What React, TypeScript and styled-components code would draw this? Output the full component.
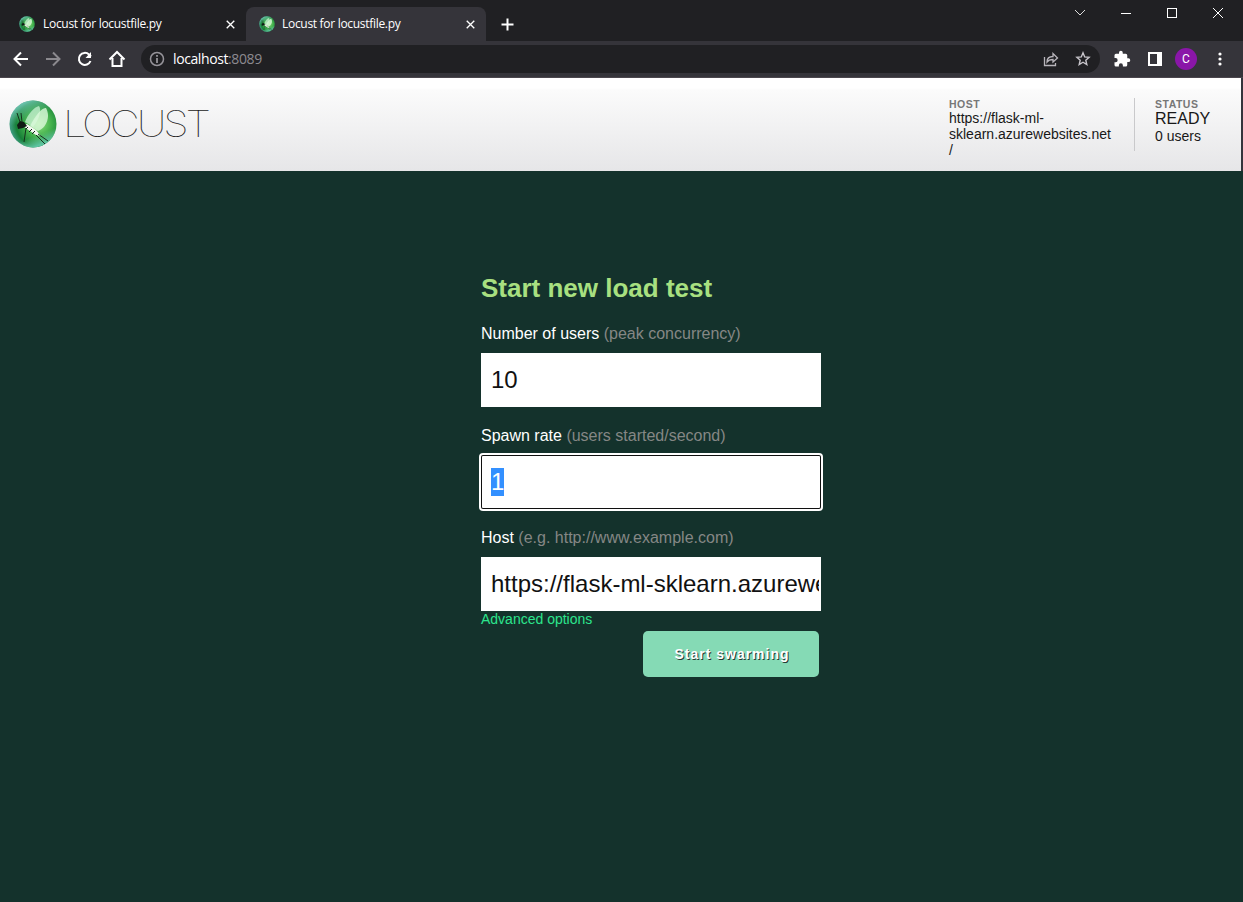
import React from 'react';
import styled, { createGlobalStyle } from 'styled-components';

const Global = createGlobalStyle`
  * { box-sizing: border-box; }
  body { margin: 0; background: #14322c; font-family: "Liberation Sans", Arial, sans-serif; overflow: hidden; }
`;
const Window = styled.div`
  width: 100%; height: 902px; display: flex; flex-direction: column; background: #14322c;
`;
const TabStrip = styled.div`
  height: 41px; flex: none; display: flex; align-items: flex-start; padding: 7px 0 0 6px; background: #202023;
`;
const Tab = styled.div<{ $active?: boolean }>`
  width: 240px; height: 34px; flex: none; display: flex; align-items: center; padding: 0 11px 0 13px;
  border-radius: 8px 8px 0 0; background: ${p => (p.$active ? '#35343a' : 'transparent')};
  svg { flex: none; }
`;
const TabTitle = styled.span<{ $gap: number }>`
  flex: 1; margin-left: ${p => p.$gap}px; color: #fff; white-space: nowrap;
  font: 12px/16px "Open Sans", "Noto Sans", sans-serif; letter-spacing: -0.3px;
`;
const NewTab = styled.div`
  height: 34px; display: flex; align-items: center; padding-left: 15px;
`;
const WindowButtons = styled.div`
  margin: -7px 19px 0 auto; height: 26px; display: flex; align-items: center; gap: 34px;
`;
const Toolbar = styled.div`
  height: 37px; flex: none; display: flex; align-items: center; padding: 0 14px 0 12px;
  background: #35343a; border-bottom: 1px solid #4b464d;
`;
const NavButtons = styled.div`
  display: flex; gap: 14px; margin-right: 15px;
`;
const AddressBar = styled.div`
  flex: 1; height: 28px; border-radius: 14px; background: #202023; display: flex; align-items: center;
  padding: 0 9px 0 8px; margin-right: 13px;
`;
const Url = styled.span`
  flex: 1; margin-left: 8px; color: #fff; font: 14px/18px "Open Sans", sans-serif; letter-spacing: -0.4px;
  em { font-style: normal; color: #8c8a90; }
`;
const AddressIcons = styled.div`
  display: flex; gap: 16px;
`;
const Extensions = styled.div`
  display: flex; align-items: center; gap: 14px;
`;
const Avatar = styled.span`
  width: 22px; height: 22px; margin: 0 0 0 -2px; border-radius: 50%; background: #8a16a8; color: #fff;
  display: flex; align-items: center; justify-content: center; font: 12px/1 Roboto, sans-serif;
`;
const Header = styled.header`
  height: 93px; flex: none; display: flex; padding: 20px 30px 0 9px; border-right: 2px solid #34343c;
  background: linear-gradient(#fff 0, #fff 10px, #fbfbfb 12px, #e6e6e8 100%);
`;
const Logo = styled.div`
  display: flex; align-items: flex-start; svg { margin-top: 2px; }
`;
const LogoName = styled.span`
  margin: 3px 0 0 6px; font: 100 37px/45px Inter, sans-serif; letter-spacing: -2.8px; color: #222;
  transform: scaleX(1.12); transform-origin: 0 0;
`;
const Stats = styled.div`
  display: flex; margin-left: auto;
`;
const Stat = styled.div<{ $width: number; $divider?: boolean }>`
  width: ${p => p.$width}px; height: 53px; font-size: 14px; line-height: 16px; color: #181818;
  ${p => p.$divider && 'border-left: 1px solid #c9c9cb; padding-left: 20px;'}
`;
const StatLabel = styled.div`
  font-size: 10.5px; line-height: 12px; font-weight: bold; letter-spacing: 0.5px; color: #777;
`;
const StatText = styled.div`
  width: 163px; overflow-wrap: break-word;
`;
const Status = styled.div`
  font-size: 16px; line-height: 18px;
`;
const Form = styled.form`
  width: 340px; margin: 102px 0 0 481px; display: flex; flex-direction: column;
`;
const Title = styled.h2`
  margin: 0 0 22px; font-size: 26px; line-height: 30px; color: #a8e080; white-space: nowrap;
`;
const Label = styled.label`
  font-size: 16px; line-height: 18px; color: #fff; margin-bottom: 10px;
  span { color: #858785; }
`;
const Field = styled.div<{ $focused?: boolean }>`
  height: 54px; margin-bottom: 20px; padding: 0 2px 0 10px; display: flex; align-items: center;
  background: #fff; color: #111; font-size: 24px; white-space: nowrap;
  ${p => p.$focused && 'box-shadow: inset 0 0 0 1px #101010, 0 0 0 2px #fff; border-radius: 2px;'}
`;
const Value = styled.span`
  overflow: hidden; flex: 1;
`;
const Selected = styled.span`
  background: #3390ff; color: #fff; line-height: 28px;
`;
const Advanced = styled.a`
  margin-top: -20px; font-size: 14px; line-height: 16px; color: #2ce58d;
`;
const Submit = styled.button`
  width: 176px; height: 46px; margin: 4px 2px 0 auto; padding: 0 0 0 2px; border: 0; border-radius: 5px;
  background: #85dab5; color: #fff; font: bold 14px/18px "Liberation Sans", sans-serif; letter-spacing: 1px;
  text-shadow: 1px 1px 0 #243b35;
`;

const LocustMark = ({ size, id }: { size: number; id: string }) => (
  <svg width={size} height={size} viewBox="0 0 48 48">
    <defs>
      <radialGradient id={id} cx=".62" cy=".5" r=".6">
        <stop offset="0" stopColor="#8be07c" />
        <stop offset=".45" stopColor="#43b04c" />
        <stop offset=".8" stopColor="#178038" />
        <stop offset="1" stopColor="#3c9a7c" />
      </radialGradient>
      <linearGradient id={id + 's'} x1=".1" y1="0" x2=".5" y2="1">
        <stop offset="0" stopColor="#86d6d4" />
        <stop offset=".45" stopColor="#6fc9a0" stopOpacity="0" />
        <stop offset=".8" stopColor="#6fc9a0" stopOpacity="0" />
        <stop offset="1" stopColor="#5cc4a0" />
      </linearGradient>
    </defs>
    <circle cx="24" cy="24" r="23.5" fill={`url(#${id})`} />
    <circle cx="24" cy="24" r="23.5" fill={`url(#${id}s)`} />
    <path d="M16 22C19 14 25 7 30 6c3 4 0 14-6 21Z" fill="#c9f2d4" opacity=".75" />
    <path d="M21 26C26 16 33 7 37 8c5 9 0 20-8 23Z" fill="#dcf9dc" opacity=".8" />
    <path d="m13 25 5-1 9 6 5 6-5-1-9-6Z" fill="#f4f8f0" />
    <path d="m8 25 3-4 4 1 3 4-4 2-5 1Z" fill="#101a14" />
    <path d="m17 29 2-2m1 5 3-3m0 5 3-3" stroke="#17231c" strokeWidth="1" />
    <path d="m11 22-3-9m5 9-1-9m5 15-2 14m12-7 9 9m-7-10 10 7" fill="none" stroke="#17301d" strokeWidth="1" />
  </svg>
);

const Cross = ({ size = 9 }: { size?: number }) => (
  <svg width={size} height={size} viewBox="0 0 10 10"><path d="m.8.8 8.4 8.4M9.2.8.8 9.2" stroke="#fff" strokeWidth="1.5" /></svg>
);

export default function App() {
  return (
    <Window>
      <Global />
      <TabStrip>
        <Tab><LocustMark size={16} id="tab-a" /><TabTitle $gap={8}>Locust for locustfile.py</TabTitle><Cross /></Tab>
        <Tab $active><LocustMark size={16} id="tab-b" /><TabTitle $gap={7}>Locust for locustfile.py</TabTitle><Cross /></Tab>
        <NewTab><svg width="13" height="13" viewBox="0 0 13 13"><path d="M6.5.5v12M.5 6.5h12" stroke="#fff" strokeWidth="2" /></svg></NewTab>
        <WindowButtons>
          <svg width="12" height="12" fill="none" stroke="#ddd"><path d="m1 3 5 5 5-5" /></svg>
          <svg width="12" height="12" stroke="#fff"><path d="M1 6.5h10" /></svg>
          <svg width="12" height="12" fill="none" stroke="#fff"><rect x="1.5" y="1.5" width="9" height="9" /></svg>
          <svg width="12" height="12" fill="none" stroke="#fff"><path d="m1 1 10 10M11 1 1 11" /></svg>
        </WindowButtons>
      </TabStrip>
      <Toolbar>
        <NavButtons>
          <svg width="18" height="18" fill="none" stroke="#fff" strokeWidth="2"><path d="M16 9H3m6-6.5L2.5 9 9 15.5" /></svg>
          <svg width="18" height="18" fill="none" stroke="#8b898e" strokeWidth="2"><path d="M2 9h13M9 2.5 15.5 9 9 15.5" /></svg>
          <svg width="18" height="18" fill="none" stroke="#fff" strokeWidth="2"><path d="M14.5 11A6 6 0 1 1 13 4.5L15 6.5" /><path d="M15 2v6H9.500Z" fill="#fff" stroke="none" /></svg>
          <svg width="18" height="18" fill="none" stroke="#fff" strokeWidth="2"><path d="M1.500 9.500 9 2l7.500 7.500M4.500 8v8h9V8" /></svg>
        </NavButtons>
        <AddressBar>
          <svg width="16" height="16" fill="none" stroke="#96949a" strokeWidth="1.5"><circle cx="8" cy="8" r="6.5" /><path d="M8 7v5M8 4v1.7" strokeWidth="1.8" /></svg>
          <Url>localhost<em>:8089</em></Url>
          <AddressIcons>
            <svg width="16" height="16" fill="none" stroke="#b8b5bb" strokeWidth="1.3"><path d="M1.500 6v8.500h11V12M4 11c0-4 3-5.500 6-5.500v-3L14.500 7 10 11V8.500C7.500 8.500 5.500 9 4 11Z" /></svg>
            <svg width="16" height="16" fill="none" stroke="#c8c5cb" strokeWidth="1.4"><path d="m8 1.800 1.700 4.100 4.400.4-3.300 2.900 1 4.300L8 11.200l-3.800 2.300 1-4.300-3.300-2.900 4.400-.4Z" /></svg>
          </AddressIcons>
        </AddressBar>
        <Extensions>
          <svg width="18" height="18" viewBox="0 0 24 24" fill="#fff"><path d="M20.500 11H19V7a2 2 0 0 0-2-2h-4V3.500a2.500 2.500 0 0 0-5 0V5H4a2 2 0 0 0-2 2v3.800h1.500a2.700 2.700 0 0 1 0 5.400H2V20a2 2 0 0 0 2 2h3.800v-1.500a2.700 2.700 0 0 1 5.400 0V22H17a2 2 0 0 0 2-2v-4h1.500a2.500 2.500 0 0 0 0-5Z" /></svg>
          <svg width="18" height="18"><path fill="#fff" fillRule="evenodd" d="M3 2h14v14H3Zm2 2v10h7V4Z" /></svg>
          <Avatar>C</Avatar>
          <svg width="18" height="18" fill="#fff"><circle cx="9" cy="4" r="1.6" /><circle cx="9" cy="9" r="1.6" /><circle cx="9" cy="14" r="1.6" /></svg>
        </Extensions>
      </Toolbar>
      <Header>
        <Logo><LocustMark size={48} id="logo" /><LogoName>LOCUST</LogoName></Logo>
        <Stats>
          <Stat $width={185}><StatLabel>HOST</StatLabel><StatText>https://flask-ml-sklearn.azurewebsites.net/</StatText></Stat>
          <Stat $width={77} $divider><StatLabel>STATUS</StatLabel><Status>READY</Status>0 users</Stat>
        </Stats>
      </Header>
      <Form>
        <Title>Start new load test</Title>
        <Label>Number of users <span>(peak concurrency)</span></Label>
        <Field><Value>10</Value></Field>
        <Label>Spawn rate <span>(users started/second)</span></Label>
        <Field $focused><Selected>1</Selected></Field>
        <Label>Host <span>(e.g. http://www.example.com)</span></Label>
        <Field><Value>https://flask-ml-sklearn.azurewebsites.net/</Value></Field>
        <Advanced>Advanced options</Advanced>
        <Submit type="button">Start swarming</Submit>
      </Form>
    </Window>
  );
}
